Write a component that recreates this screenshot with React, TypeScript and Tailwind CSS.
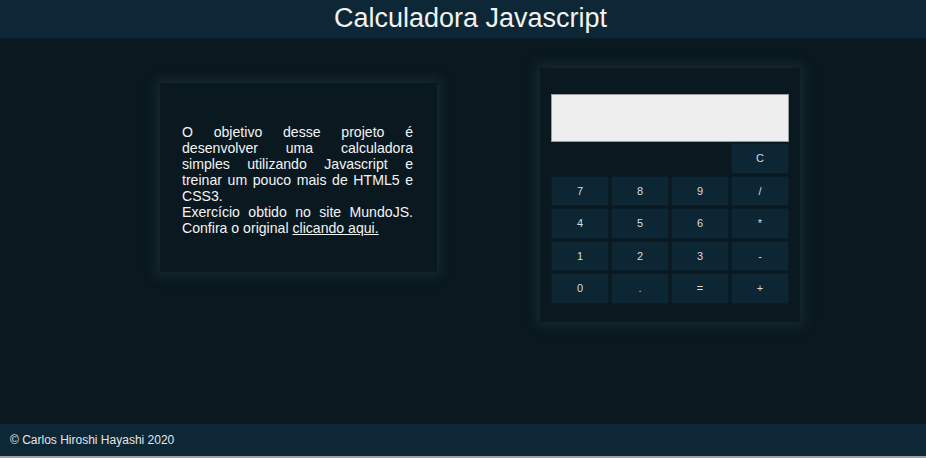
const keys = ["7", "8", "9", "/", "4", "5", "6", "*", "1", "2", "3", "-", "0", ".", "=", "+"];

const Key = ({ label }: { label: string }) => (
  <button className="h-[30.5px] bg-[#0c2634] border border-[#0a1e29] rounded-[2px] text-[11px] text-[#d6dde0]">
    {label}
  </button>
);

export default function App() {
  return (
    <div className="w-[926px] h-[458px] flex flex-col bg-[#0a1920] font-['Liberation_Sans',Arial,sans-serif] overflow-hidden">
      <header className="h-[38px] shrink-0 bg-[#0d2736] flex items-center justify-center pl-[15px]">
        <h1 className="text-[27px] leading-none text-[#f2f2f2] -mt-[1px]">Calculadora Javascript</h1>
      </header>

      <main className="flex-1 flex items-start pl-[160px]">
        <section className="mt-[45px] w-[277px] h-[189px] flex items-center pl-[22px] pr-[24px] pt-[4px] bg-[#0a1920] shadow-[0_0_10px_4px_rgba(26,42,50,0.85)]">
          <p className="text-[14.1px] leading-[16px] text-[#f4f4f4] text-justify">
            O objetivo desse projeto é desenvolver uma calculadora simples utilizando Javascript e treinar um pouco mais de HTML5 e CSS3.
            <br />
            Exercício obtido no site MundoJS. Confira o original <a className="underline">clicando aqui.</a>
          </p>
        </section>

        <section className="ml-[103px] mt-[30px] w-[260px] h-[254px] px-[11px] pt-[26px] bg-[#0a1920] shadow-[0_0_10px_4px_rgba(26,42,50,0.85)]">
          <div className="h-[48px] bg-[#eeeeee] border border-[#9a9a9a]"></div>
          <div className="grid grid-cols-4 gap-[2px] mt-[1px]">
            <div className="col-span-3"></div>
            <Key label="C" />
            {keys.map((k) => (
              <Key key={k} label={k} />
            ))}
          </div>
        </section>
      </main>

      <footer className="h-[34px] shrink-0 bg-[#0d2736] border-b-2 border-[#9aa3a8] flex items-center px-[10px]">
        <span className="text-[12px] text-[#e6e6e6]">© Carlos Hiroshi Hayashi 2020</span>
      </footer>
    </div>
  );
}
